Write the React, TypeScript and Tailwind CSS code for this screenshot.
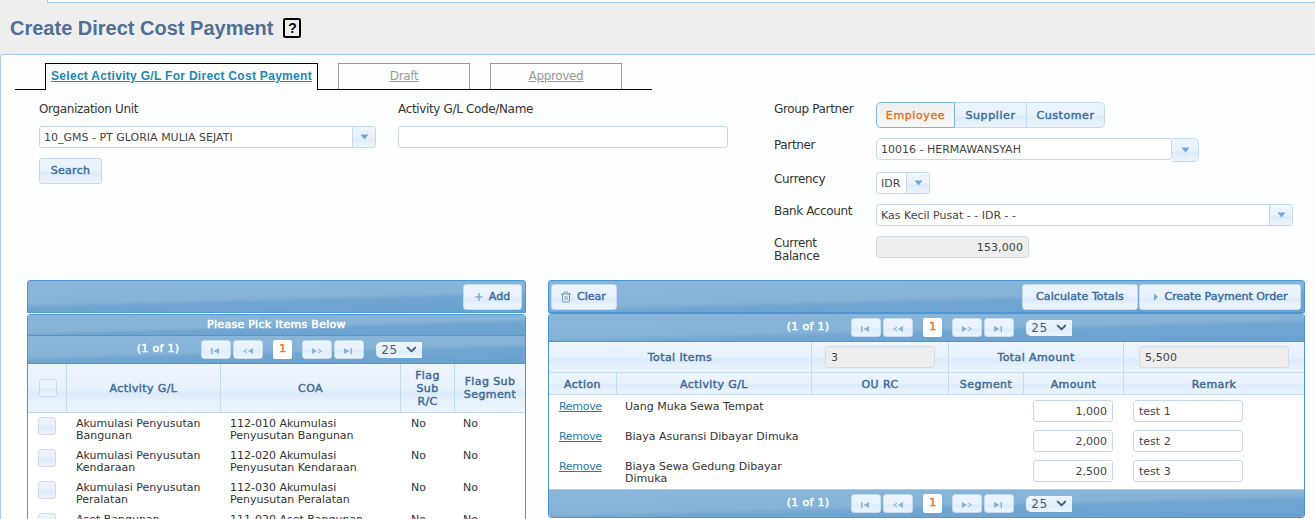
import { ChevronDown, Plus, Trash2 } from 'lucide-react';
import type { ReactNode } from 'react';

const bar = 'bg-[linear-gradient(178.5deg,#8ab6da_0%,#85b3d8_52%,#70a6d2_62%,#68a0cf_100%)]';
const soft = 'bg-[linear-gradient(#edf5fe_0%,#e8f2fd_50%,#dcebfa_60%,#e6f1fc_78%,#ebf4fe_100%)]';
const heavy = '[-webkit-text-stroke:0.45px_currentColor]';
const btn = `inline-flex items-center justify-center rounded-[3px] border border-[#c3daf0] ${soft} ${heavy} text-[#3b6e9e]`;
const field = 'rounded-[3px] border border-[#c5d9ec] bg-white text-[#444]';
const label = 'text-[12px] leading-[13px] tracking-[-0.35px] text-[#333]';

function Caret() {
  return (
    <svg width="9" height="6" viewBox="0 0 9 6" aria-hidden>
      <path d="M0.5 0.5h8L4.5 5.5z" fill="#6fa8d6" />
    </svg>
  );
}

function SelectBox({ value, className, arrow = 'w-[23px]' }: { value: string; className: string; arrow?: string }) {
  return (
    <div className={`flex h-[22px] items-stretch overflow-hidden ${field} ${className}`}>
      <div className="flex min-w-0 flex-1 items-center pl-[4px] pt-[2px] text-[11px]">{value}</div>
      <div className={`flex items-center justify-center border-l border-[#c5d9ec] ${soft} ${arrow}`}>
        <Caret />
      </div>
    </div>
  );
}

function FormRow({ text, className, children }: { text: ReactNode; className: string; children: ReactNode }) {
  return (
    <div className={`flex ${className}`}>
      <div className={`w-[102px] shrink-0 pt-[1px] ${label}`}>{text}</div>
      {children}
    </div>
  );
}

function PageIcon({ kind }: { kind: 'first' | 'prev' | 'next' | 'last' }) {
  const d = {
    first: 'M1 1v6h1.5V1zM9 1v6L3.5 4z',
    prev: 'M5 1.5 1 4l4 2.5V5.6L2.8 4 5 2.4zM11 1v6L6 4z',
    next: 'M1 1v6l5-3zM7 1.5 11 4 7 6.5V5.6L9.2 4 7 2.4z',
    last: 'M1 1v6l5.5-3zM7.5 1v6H9V1z',
  }[kind];
  return (
    <svg width="12" height="8" viewBox="0 0 12 8" className="mt-[2px]" aria-hidden>
      <path d={d} fill="#86b3d8" />
    </svg>
  );
}

function Paginator({ className = '' }: { className?: string }) {
  const pageBtn = `${btn} h-[19px] w-[30px]`;
  return (
    <div className={`flex h-[28px] items-center justify-center pl-[6px] ${bar} ${className}`}>
      <span className={`mr-[22px] text-[11px] tracking-[0.3px] text-white ${heavy}`}>(1 of 1)</span>
      <div className={`${pageBtn} mr-[2px]`}><PageIcon kind="first" /></div>
      <div className={pageBtn}><PageIcon kind="prev" /></div>
      <div className={`mx-[10px] flex h-[19px] w-[19px] items-center justify-center rounded-[2px] bg-white text-[11px] text-[#e8722a] ${heavy}`}>1</div>
      <div className={`${pageBtn} mr-[2px]`}><PageIcon kind="next" /></div>
      <div className={pageBtn}><PageIcon kind="last" /></div>
      <div className={`ml-[12px] flex h-[16px] w-[46px] items-center justify-between rounded-l-[5px] pl-[5px] pr-[3px] text-[12px] tracking-[0.5px] text-[#3b5f85] ${soft}`}>
        25
        <ChevronDown size={15} strokeWidth={3.2} className="text-[#33608c]" />
      </div>
    </div>
  );
}

function Toolbar({ children }: { children: ReactNode }) {
  return (
    <div className={`flex h-[33px] items-center justify-between rounded-t-[3px] border border-[#4b96d6] pl-[2px] pr-[3px] ${bar}`}>
      {children}
    </div>
  );
}

function ToolButton({ className, children }: { className: string; children: ReactNode }) {
  return <div className={`${btn} h-[26px] gap-[4px] pt-[1px] text-[11px] ${className}`}>{children}</div>;
}

const coaRows = [
  ['Akumulasi Penyusutan Bangunan', '112-010 Akumulasi Penyusutan Bangunan'],
  ['Akumulasi Penyusutan Kendaraan', '112-020 Akumulasi Penyusutan Kendaraan'],
  ['Akumulasi Penyusutan Peralatan', '112-030 Akumulasi Penyusutan Peralatan'],
  ['Aset Bangunan', '111-020 Aset Bangunan'],
];

const paymentRows = [
  { name: 'Uang Muka Sewa Tempat', amount: '1,000', remark: 'test 1', height: 'h-[30px]' },
  { name: 'Biaya Asuransi Dibayar Dimuka', amount: '2,000', remark: 'test 2', height: 'h-[30px]' },
  { name: 'Biaya Sewa Gedung Dibayar Dimuka', amount: '2,500', remark: 'test 3', height: 'h-[34px]' },
];

const th = `border-b border-l border-[#c5d9ec] text-center text-[11px] font-normal leading-[13px] tracking-[0.4px] text-[#3f6a94] ${heavy} ${soft}`;

function PickTable() {
  return (
    <table className="w-full table-fixed border-separate border-spacing-0">
      <colgroup>
        <col className="w-[38px]" />
        <col className="w-[154px]" />
        <col className="w-[180px]" />
        <col className="w-[54px]" />
        <col className="w-[71px]" />
      </colgroup>
      <thead>
        <tr className="h-[49px]">
          <th className={`${th} border-l-0`}>
            <div className={`ml-[11px] h-[18px] w-[18px] rounded-[3px] border border-[#c9dcee] ${soft}`} />
          </th>
          <th className={th}>Activity G/L</th>
          <th className={th}>COA</th>
          <th className={th}>Flag<br />Sub<br />R/C</th>
          <th className={th}>Flag Sub<br />Segment</th>
        </tr>
      </thead>
      <tbody className="text-[11px] leading-[12px] text-[#333]">
        {coaRows.map((row) => (
          <tr key={row[1]} className="h-[32px] align-top">
            <td className="pt-[4px]">
              <div className={`mx-auto h-[18px] w-[18px] rounded-[3px] border border-[#c9dcee] ${soft}`} />
            </td>
            <td className="pl-[10px] pr-[6px] pt-[5px]">{row[0]}</td>
            <td className="pl-[10px] pr-[20px] pt-[5px]">{row[1]}</td>
            <td className="pl-[11px] pt-[5px]">No</td>
            <td className="pl-[9px] pt-[5px]">No</td>
          </tr>
        ))}
      </tbody>
    </table>
  );
}

function PaymentTable() {
  const grayBox = 'flex h-[22px] items-center rounded-[3px] border border-[#cfdce8] bg-[#eeeeee] pl-[5px] text-[11px] tracking-[0.1px] text-[#444] [-webkit-text-stroke:0]';
  return (
    <table className="w-full table-fixed border-separate border-spacing-0 bg-white">
      <colgroup>
        <col className="w-[67px]" />
        <col className="w-[195px]" />
        <col className="w-[137px]" />
        <col className="w-[75px]" />
        <col className="w-[100px]" />
        <col className="w-[181px]" />
      </colgroup>
      <thead>
        <tr className="h-[31px]">
          <th colSpan={2} className={`${th} border-l-0`}>Total Items</th>
          <th className={`${th} px-[13px]`}><div className={grayBox}>3</div></th>
          <th colSpan={2} className={th}>Total Amount</th>
          <th className={`${th} px-[15px]`}><div className={grayBox}>5,500</div></th>
        </tr>
        <tr className="h-[22px]">
          <th className={`${th} border-l-0 pt-[1px]`}>Action</th>
          <th className={`${th} pt-[1px]`}>Activity G/L</th>
          <th className={`${th} pt-[1px]`}>OU RC</th>
          <th className={`${th} pt-[1px]`}>Segment</th>
          <th className={`${th} pt-[1px]`}>Amount</th>
          <th className={`${th} pt-[1px]`}>Remark</th>
        </tr>
      </thead>
      <tbody className="text-[11px] leading-[12px] text-[#333]">
        {paymentRows.map((row) => (
          <tr key={row.remark} className={`${row.height} align-top`}>
            <td className="pl-[10px] pt-[6px]">
              <a href="#" className="tracking-[-0.3px] text-[#1f7aa8] underline">Remove</a>
            </td>
            <td className="pl-[9px] pr-[10px] pt-[6px]">{row.name}</td>
            <td />
            <td />
            <td className="pl-[10px] pt-[5px]">
              <div className={`flex h-[22px] w-[80px] items-center justify-end pr-[5px] pt-[1px] ${field}`}>{row.amount}</div>
            </td>
            <td className="pl-[10px] pt-[5px]">
              <div className={`flex h-[22px] w-[110px] items-center pl-[5px] pt-[1px] ${field}`}>{row.remark}</div>
            </td>
          </tr>
        ))}
      </tbody>
    </table>
  );
}

export default function App() {
  return (
    <div className="h-[519px] w-[1315px] overflow-hidden bg-[#eeeeee] font-['DejaVu_Sans',sans-serif]">
      <div className="ml-[47px] h-[3px] border-b border-l border-[#a9cde9] bg-white" />
      <div className="flex h-[51px] items-center pb-[2px] pl-[10px]">
        <h1 className="font-['Liberation_Sans',sans-serif] text-[20px] font-bold text-[#4f6f97]">Create Direct Cost Payment</h1>
        <span className="ml-[10px] flex h-[20px] w-[18px] items-center justify-center rounded-[2px] border-2 border-black font-['Liberation_Sans',sans-serif] text-[14px] font-bold leading-none text-black">?</span>
      </div>

      <div className="h-[465px] rounded-tl-[4px] border-l border-t border-[#a9cde9] bg-[#fdfefe]">
        <div className="ml-[14px] mt-[8px] flex h-[27px] w-[637px] items-end border-b border-black pl-[30px]">
          <div className="relative top-[1px] flex h-[27px] w-[273px] items-center justify-center border border-b-0 border-black bg-[#fdfefe] pb-[2px] font-['Liberation_Sans',sans-serif] text-[12px] font-bold tracking-[0.3px] text-[#1d86b5] underline">
            Select Activity G/L For Direct Cost Payment
          </div>
          <div className="ml-[20px] flex h-[26px] w-[132px] items-center justify-center border border-b-0 border-[#999] pb-[1px] text-[12px] tracking-[-0.35px] text-[#999] underline">Draft</div>
          <div className="ml-[20px] flex h-[26px] w-[132px] items-center justify-center border border-b-0 border-[#999] pb-[1px] text-[12px] tracking-[-0.35px] text-[#999] underline">Approved</div>
        </div>

        <div className="flex h-[190px] pl-[38px] pt-[13px]">
          <div className="w-[337px]">
            <div className={label}>Organization Unit</div>
            <SelectBox value="10_GMS - PT GLORIA MULIA SEJATI" className="mt-[10px] w-[337px]" />
            <div className={`${btn} mt-[10px] h-[26px] w-[63px] text-[11px] tracking-[0.3px]`}>Search</div>
          </div>
          <div className="ml-[22px] w-[330px]">
            <div className={label}>Activity G/L Code/Name</div>
            <div className={`mt-[10px] h-[22px] w-[330px] ${field}`} />
          </div>

          <div className="-mt-[1px] ml-[46px]">
            <FormRow text="Group Partner" className="">
              <div className={`flex h-[26px] text-[11px] tracking-[0.6px] ${heavy}`}>
                <div className="flex w-[79px] items-center justify-center rounded-l-[5px] border border-[#7fb4e0] bg-[linear-gradient(#efefef,#f7f7f7)] pt-[2px] text-[#e2761c]">Employee</div>
                <div className={`flex w-[72px] items-center justify-center border-y border-r border-[#c3daf0] pt-[2px] text-[#3b6e9e] ${soft}`}>Supplier</div>
                <div className={`flex w-[78px] items-center justify-center rounded-r-[5px] border-y border-r border-[#c3daf0] pt-[2px] text-[#3b6e9e] ${soft}`}>Customer</div>
              </div>
            </FormRow>
            <FormRow text="Partner" className="mt-[10px]">
              <div className="flex items-start">
                <div className={`flex h-[22px] w-[296px] items-center rounded-l-[5px] pl-[4px] pt-[2px] text-[11px] ${field}`}>10016 - HERMAWANSYAH</div>
                <div className={`flex h-[24px] w-[27px] items-center justify-center rounded-r-[5px] border border-l-0 border-[#c5d9ec] ${soft}`}><Caret /></div>
              </div>
            </FormRow>
            <FormRow text="Currency" className="mt-[10px]">
              <SelectBox value="IDR" className="w-[54px]" />
            </FormRow>
            <FormRow text="Bank Account" className="mt-[10px]">
              <SelectBox value="Kas Kecil Pusat - - IDR - -" className="w-[417px]" />
            </FormRow>
            <FormRow text={<>Current<br />Balance</>} className="mt-[10px]">
              <div className="flex h-[22px] w-[153px] items-center justify-end rounded-[3px] border border-[#cfdce8] bg-[#eeeeee] pr-[5px] pt-[2px] text-[11px] tracking-[0.1px] text-[#444]">153,000</div>
            </FormRow>
          </div>
        </div>

        <div className="ml-[26px] flex items-start gap-[22px]">
          <section className="w-[499px]">
            <Toolbar>
              <span />
              <ToolButton className="w-[59px] pr-[2px]"><Plus size={12} strokeWidth={2.2} className="text-[#5f94c4]" />Add</ToolButton>
            </Toolbar>
            <div className="mt-[1px] overflow-hidden rounded-t-[4px] border-x border-[#4b96d6] bg-white">
              <div className={`flex h-[22px] items-center justify-center border-b border-t border-[#4b96d6] text-[11px] tracking-[0.3px] text-white ${heavy} ${bar}`}>Please Pick Items Below</div>
              <Paginator className="border-b border-[#4b96d6]" />
              <PickTable />
            </div>
          </section>

          <section className="w-[757px]">
            <Toolbar>
              <ToolButton className="w-[66px] gap-[5px] pr-[2px]"><Trash2 size={12} strokeWidth={1.8} className="text-[#5f94c4]" />Clear</ToolButton>
              <div className="flex gap-[1px]">
                <ToolButton className="w-[116px] tracking-[0.1px]">Calculate Totals</ToolButton>
                <ToolButton className="w-[162px]">
                  <svg width="6" height="8" viewBox="0 0 6 8" className="mr-[2px]" aria-hidden><path d="M1 0.5v7L5 4z" fill="#6fa8d6" /></svg>
                  Create Payment Order
                </ToolButton>
              </div>
            </Toolbar>
            <div className="overflow-hidden rounded-b-[4px] rounded-t-[4px] border border-t-0 border-[#4b96d6] bg-white">
              <Paginator className="h-[29px] border-b border-t border-[#4b96d6]" />
              <PaymentTable />
              <Paginator className="h-[28px] border-t border-[#a9cde9]" />
            </div>
          </section>
        </div>
      </div>
    </div>
  );
}
